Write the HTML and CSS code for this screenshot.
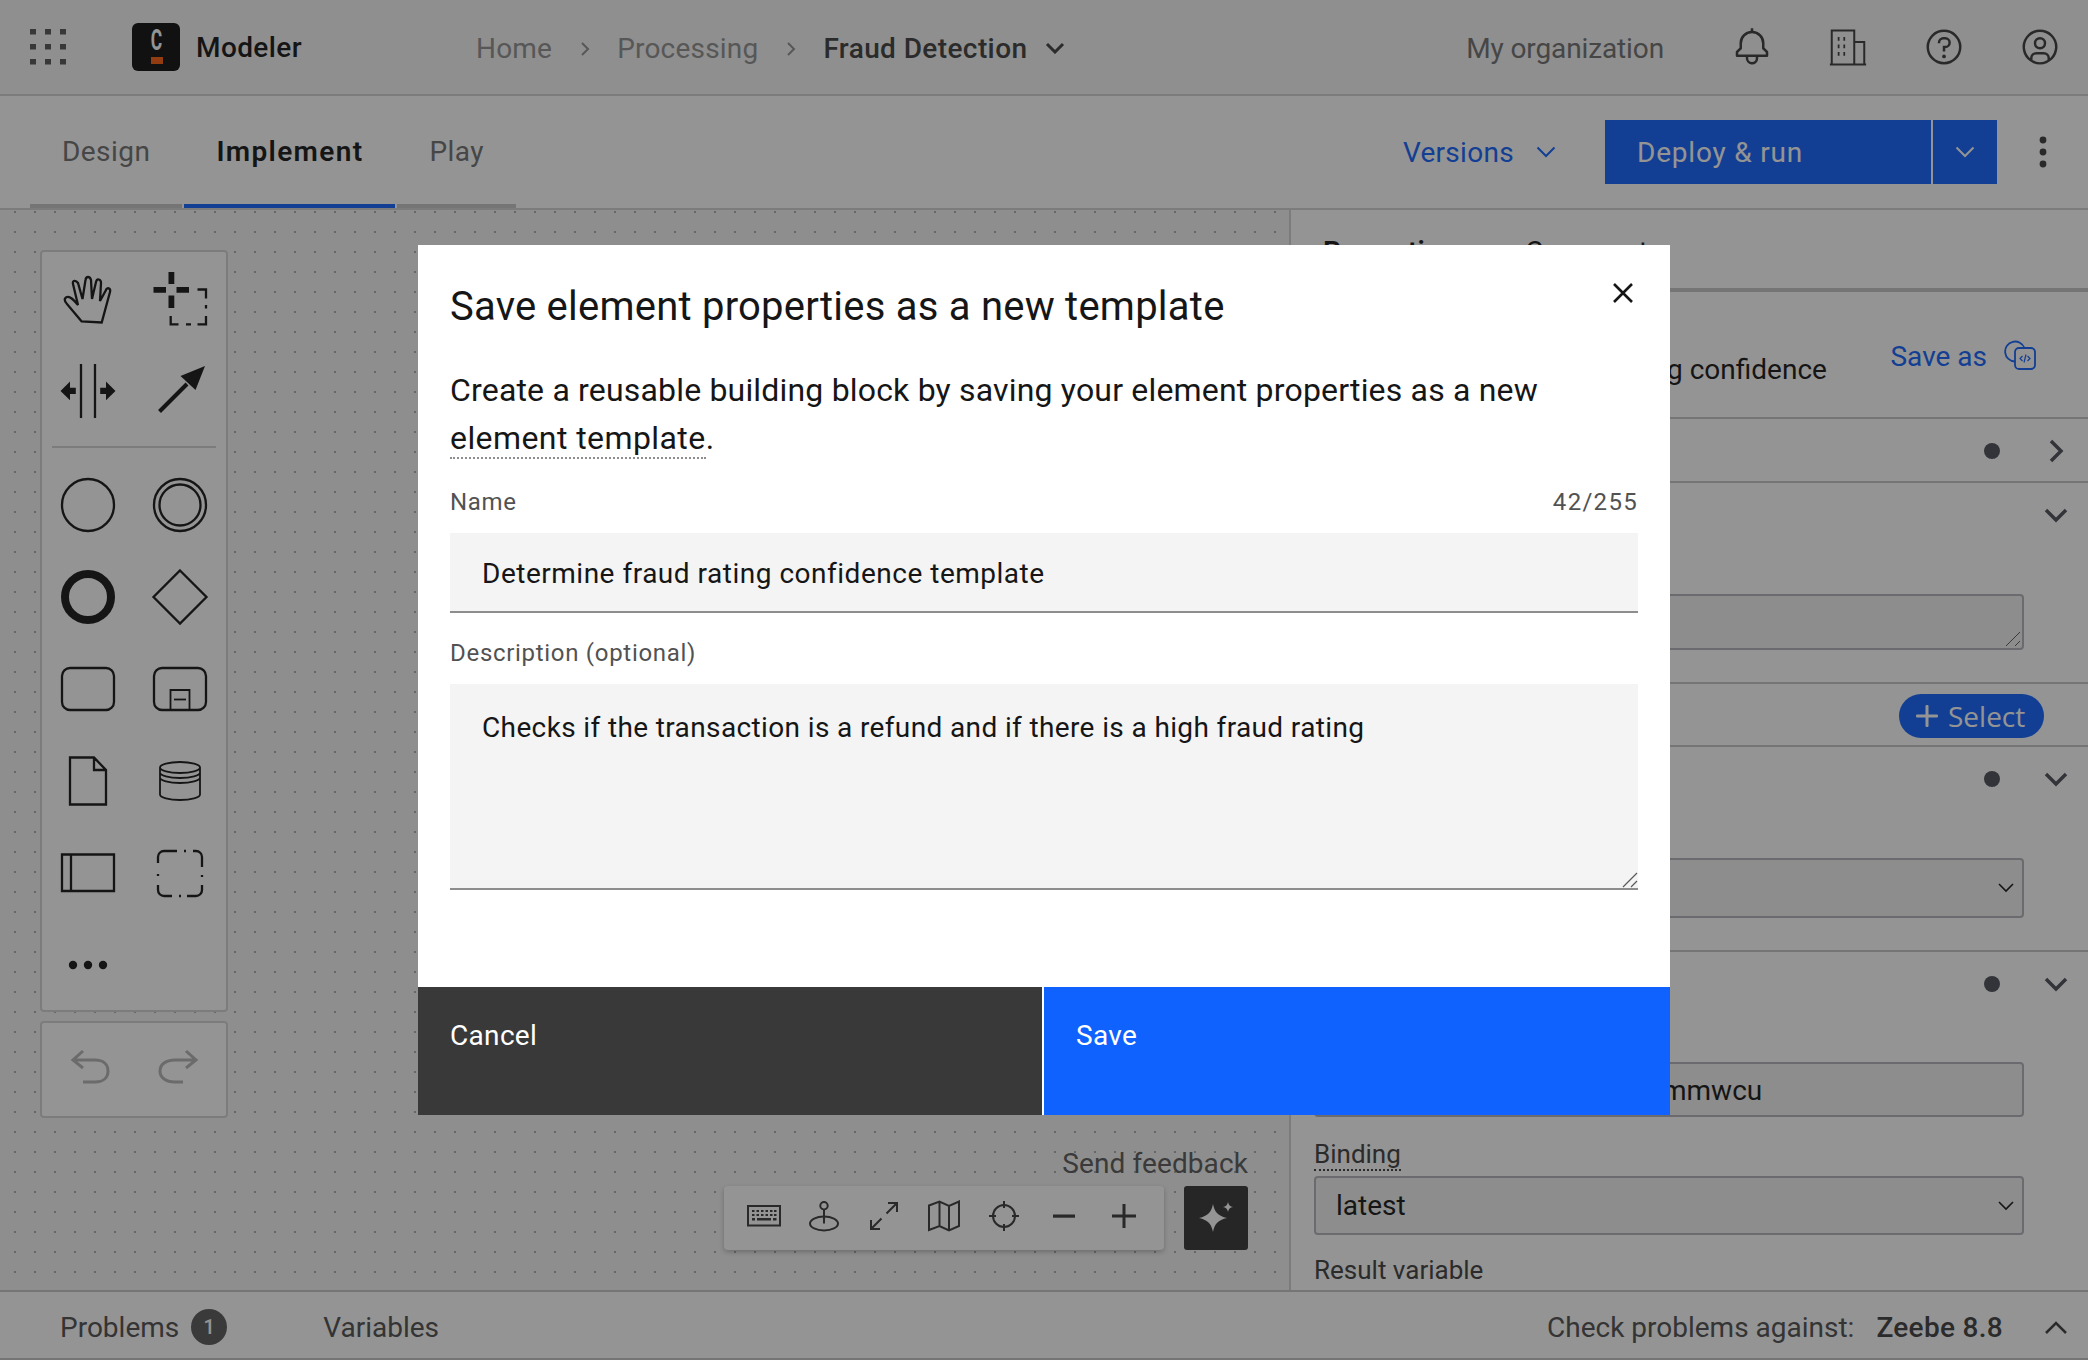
FILE: index.html
```html
<!DOCTYPE html>
<html lang="en">

<head>
    <meta charset="UTF-8" />
    <meta name="viewport" content="width=device-width, initial-scale=1.0" />
    <title>Modeler - Fraud Detection</title>
    <link rel="stylesheet" href="styles.css">
</head>

<body>
    <div class="app">
        <header class="topbar">
            <svg class="apps" width="37" height="36" viewBox="0 0 37 36" fill="#555">
                <rect x="0" y="0" width="6" height="5.500" /><rect x="15" y="0" width="6" height="5.500" /><rect x="30" y="0" width="6" height="5.500" />
                <rect x="0" y="15" width="6" height="5.500" /><rect x="15" y="15" width="6" height="5.500" /><rect x="30" y="15" width="6" height="5.500" />
                <rect x="0" y="30" width="6" height="5.500" /><rect x="15" y="30" width="6" height="5.500" /><rect x="30" y="30" width="6" height="5.500" />
            </svg>
            <div class="logo"><span class="logo-c">C</span><i class="logo-dot"></i></div>
            <div class="product">Modeler</div>
            <nav class="crumbs">
                <span class="crumb">Home</span>
                <svg class="crumb-sep" width="12" height="14" viewBox="0 0 12 14"><path d="M3 1l6 6-6 6" /></svg>
                <span class="crumb">Processing</span>
                <svg class="crumb-sep" width="12" height="14" viewBox="0 0 12 14"><path d="M3 1l6 6-6 6" /></svg>
                <span class="crumb current">Fraud Detection</span>
                <svg class="crumb-caret" width="20" height="12" viewBox="0 0 20 12"><path d="M2 2l8 8 8-8" /></svg>
            </nav>
            <div class="topbar-right">
                <span class="org">My organization</span>
                <div class="top-icon">
                    <svg width="40" height="40" viewBox="0 0 32 32" fill="#3a3a3a"><path d="M28.7071,19.293,26,16.5859V13a10.0136,10.0136,0,0,0-9-9.9492V1H15V3.0508A10.0136,10.0136,0,0,0,6,13v3.5859L3.2929,19.293A1,1,0,0,0,3,20v3a1,1,0,0,0,1,1h7v.7768a5.152,5.152,0,0,0,4.5,5.1987A5.0057,5.0057,0,0,0,21,25V24h7a1,1,0,0,0,1-1V20A1,1,0,0,0,28.7071,19.293ZM19,25a3,3,0,0,1-6,0V24h6Zm8-3H5V20.4141L7.707,17.707A1,1,0,0,0,8,17V13a8,8,0,0,1,16,0v4a1,1,0,0,0,.2929.707L27,20.4141Z" /></svg>
                </div>
                <div class="top-icon">
                    <svg width="40" height="40" viewBox="0 0 32 32" fill="none" stroke="#3a3a3a" stroke-width="1.6"><path d="M3 30V2.8h18V30M21 12h8v18M1.5 30h29" /><path d="M8.5 8v3M13 8v3M8.5 14v3M13 14v3M8.5 20v3M13 20v3" stroke-width="1.4" /></svg>
                </div>
                <div class="top-icon">
                    <svg width="40" height="40" viewBox="0 0 32 32" fill="#3a3a3a"><path d="M16,2A14,14,0,1,0,30,16,14,14,0,0,0,16,2Zm0,26A12,12,0,1,1,28,16,12,12,0,0,1,16,28Z" /><circle cx="16" cy="23.5" r="1.5" /><path d="M17,8H15.5A4.49,4.49,0,0,0,11,12.5V13h2v-.5A2.5,2.5,0,0,1,15.5,10H17a2.5,2.5,0,0,1,0,5H15v4.5h2V17a4.5,4.5,0,0,0,0-9Z" /></svg>
                </div>
                <div class="top-icon">
                    <svg width="40" height="40" viewBox="0 0 32 32" fill="#3a3a3a"><path d="M16,8a5,5,0,1,0,5,5A5,5,0,0,0,16,8Zm0,8a3,3,0,1,1,3-3A3.0034,3.0034,0,0,1,16,16Z" /><path d="M16,2A14,14,0,1,0,30,16,14.0158,14.0158,0,0,0,16,2ZM10,26.3765V25a3.0033,3.0033,0,0,1,3-3h6a3.0033,3.0033,0,0,1,3,3v1.3765a11.8989,11.8989,0,0,1-12,0Zm13.9925-1.4507A5.0016,5.0016,0,0,0,19,20H13a5.0016,5.0016,0,0,0-4.9925,4.9258,12,12,0,1,1,15.985,0Z" /></svg>
                </div>
            </div>
        </header>

        <div class="modebar">
            <div class="tabs">
                <div class="tab">Design</div>
                <div class="tab active">Implement</div>
                <div class="tab">Play</div>
            </div>
            <div class="modebar-right">
                <span class="versions">Versions</span>
                <svg class="versions-caret" width="20" height="12" viewBox="0 0 20 12"><path d="M1.5 1.5L10 10l8.5-8.5" /></svg>
                <div class="deploy">
                    <span class="deploy-main">Deploy &amp; run</span>
                    <span class="deploy-caret"><svg width="20" height="12" viewBox="0 0 20 12"><path d="M1.5 1.5L10 10l8.5-8.5" /></svg></span>
                </div>
                <svg class="kebab" width="8" height="32" viewBox="0 0 8 32" fill="#3a3a3a"><circle cx="4" cy="4" r="3.4" /><circle cx="4" cy="16" r="3.4" /><circle cx="4" cy="28" r="3.4" /></svg>
            </div>
        </div>

        <div class="workspace">
            <main class="canvas">
                <div class="palette">
                    <!-- hand tool -->
                    <svg class="tool" viewBox="0 0 92 92"><path class="thin" d="M39.7 69.5L25 52c-3-3-3-6 0-7 3-1 6 2 11 8l-5-21c-1-4 3-4 5-1l4.500 16 3-19c.5-4 4.500-4 5.500 0l1 19 4-17c1-4 5-3 5 1l-1 18 6-11c1-3 5-2 4 2l-8.300 30.500z" /></svg>
                    <!-- lasso -->
                    <svg class="tool" viewBox="0 0 92 92"><path fill="#161616" d="M34.500 20h5.800v12h-5.800zM34.500 43.500h5.800V56h-5.800zM19.500 35h12.500v5.800H19.500zM42.500 35h12.500v5.800H42.500z" /><path class="thin" d="M63.500 37.500H72v9M72 53v3.500M72 64v8.300h-8.500M57 72.300h-5M44.500 72.300h-7.800V64" /></svg>
                    <!-- space tool -->
                    <svg class="tool" viewBox="0 0 92 92"><path class="thin" d="M39 20v54M53 20v54" /><path fill="#161616" d="M18.500 47L28 37.500v6.200h5.800V50H28v6.300zM73.500 47L64 37.500v6.200h-5.800V50H64v6.300z" /></svg>
                    <!-- global connect -->
                    <svg class="tool" viewBox="0 0 92 92"><path class="thick" d="M25.500 67.500L53 40" /><path fill="#161616" d="M71 22L61.500 46 46.500 32z" /></svg>

                    <div class="palette-sep"></div>

                    <svg class="tool" viewBox="0 0 92 92"><circle class="thin" cx="46" cy="46" r="26" /></svg>
                    <svg class="tool" viewBox="0 0 92 92"><circle class="thin" cx="46" cy="46" r="26" /><circle class="thin" cx="46" cy="46" r="20.500" /></svg>
                    <svg class="tool" viewBox="0 0 92 92"><circle cx="46" cy="46" r="23" fill="none" stroke="#161616" stroke-width="8" /></svg>
                    <svg class="tool" viewBox="0 0 92 92"><path class="thin" d="M46 19.500L72.500 46 46 72.500 19.500 46z" /></svg>
                    <svg class="tool" viewBox="0 0 92 92"><rect class="thin" x="20" y="25" width="52" height="42" rx="8" /></svg>
                    <svg class="tool" viewBox="0 0 92 92"><rect class="thin" x="20" y="25" width="52" height="42" rx="8" /><path class="hair" d="M36.500 67V47h19v20" /><path class="hair" d="M40 56.500h12" /></svg>
                    <svg class="tool" viewBox="0 0 92 92"><path class="thin" d="M28 22.500h24L64 35v34.500H28zM52 22.500V35h12" /></svg>
                    <svg class="tool" viewBox="0 0 92 92"><path class="hair" d="M26 32.500c0-3 9-5.500 20-5.500s20 2.500 20 5.500-9 5.500-20 5.500-20-2.500-20-5.500zM26 32.500v27c0 3 9 5.500 20 5.500s20-2.500 20-5.500v-27M26 37.500c0 3 9 5.500 20 5.500s20-2.500 20-5.500M26 42.500c0 3 9 5.500 20 5.500s20-2.500 20-5.500" /></svg>
                    <svg class="tool" viewBox="0 0 92 92"><path class="thin" d="M20 27.500h52v36.500H20zM29 27.500v36.500" /></svg>
                    <svg class="tool" viewBox="0 0 92 92"><path class="thin" d="M24 36v-6a6 6 0 0 1 6-6h13M50 24h2M59 24h3a6 6 0 0 1 6 6v10M68 48v2M68 58v5a6 6 0 0 1-6 6h-9M45 69h2M38 69h-8a6 6 0 0 1-6-6v-5M24 47v2" /></svg>
                    <svg class="tool" viewBox="0 0 92 92"><g class="solid"><circle cx="31" cy="46" r="4.200" /><circle cx="46" cy="46" r="4.200" /><circle cx="61" cy="46" r="4.200" /></g></svg>
                </div>

                <div class="history">
                    <svg class="tool" viewBox="0 0 92 92"><path class="muted" d="M41 28L31 37l10 8M31 37h22c9 0 13 5 13 11s-4 11-13 11H41" /></svg>
                    <svg class="tool" viewBox="0 0 92 92"><path class="muted" d="M52 28l10 9-10 8M62 37H41c-10 0-15 5-15 11s5 11 15 11h8" /></svg>
                </div>

                <div class="canvas-actions">
                    <div class="feedback">Send feedback</div>
                    <div class="actions-row">
                        <div class="viewbar">
                            <svg class="view-icon" viewBox="0 0 36 32" fill="#3a3a3a"><path fill-rule="evenodd" d="M1 5h34v21.500H1zm2 2v17.500h30V7z" /><path d="M6 10h2.500v2H6zM10.500 10H13v2h-2.500zM15 10h2.500v2H15zM19.500 10H22v2h-2.500zM24 10h2.500v2H24zM28 10h2.500v2H28zM6 14h2.500v2H6zM10.500 14H13v2h-2.500zM15 14h2.500v2H15zM19.500 14H22v2h-2.500zM24 14h2.500v2H24zM28 14h2.500v2H28zM6 18h3v2.500H6zM11 18h14v2.500H11zM27 18h3.500v2.500H27z" /></svg>
                            <svg class="view-icon" viewBox="0 0 32 32"><g class="line"><circle cx="16" cy="5.700" r="3.700" /><ellipse cx="16" cy="23.500" rx="14" ry="7" /><path d="M16 9.500v14" /></g></svg>
                            <svg class="view-icon" viewBox="0 0 32 32"><g class="line"><path d="M20 3h9v9M29 3L18.500 13.500M12 29H3v-9M3 29l10.500-10.500" /></g></svg>
                            <svg class="view-icon" viewBox="0 0 32 32"><g class="line"><path d="M1 5.500l10.500-4L21 6l10-4.500V26l-10 4.500L11.500 26 1 30zM11.500 1.500V26M21 6v24.500" /></g></svg>
                            <svg class="view-icon" viewBox="0 0 32 32"><g class="line"><circle cx="16" cy="16" r="11" /><path d="M16 1v7M16 24v7M1 16h7M24 16h7" /></g></svg>
                            <svg class="view-icon" viewBox="0 0 32 32" fill="#3a3a3a"><rect x="5" y="14.500" width="22" height="3.200" /></svg>
                            <svg class="view-icon" viewBox="0 0 32 32" fill="#3a3a3a"><rect x="4" y="14.500" width="24" height="3" /><rect x="14.500" y="4" width="3" height="24" /></svg>
                        </div>
                        <div class="ai-button">
                            <svg width="36" height="36" viewBox="0 0 36 36" fill="#fff"><path d="M15 4c1.500 8 5 12 14 14-9 2-12.500 6-14 14-1.500-8-5-12-14-14 9-2 12.500-6 14-14z" /><path d="M30 2c.6 3 2 4.400 5 5-3 .6-4.400 2-5 5-.6-3-2-4.400-5-5 3-.6 4.400-2 5-5z" /></svg>
                        </div>
                    </div>
                </div>
            </main>

            <aside class="props">
                <div class="props-tabs">
                    <span class="props-tab active">Properties</span>
                    <span class="props-tab">Comments</span>
                </div>
                <div class="props-head">
                    <span class="props-name">Determine fraud rating confidence</span>
                    <span class="save-as">Save as</span>
                    <svg width="34" height="30" viewBox="0 0 34 30" fill="none" stroke="#0f62fe" stroke-width="1.800"><path d="M11 21.500A10 10 0 1 1 20.500 8" /><rect x="11" y="8" width="20" height="21" rx="4" /><path d="M18.500 16l-2.500 2.500 2.500 2.500M23.500 16l2.500 2.500-2.500 2.500M22 14.500l-2 8" stroke-width="1.200" /></svg>
                </div>
                <section class="group group-short">
                    <div class="group-head"><i class="dot"></i><svg class="arrow" width="32" height="32" viewBox="0 0 32 32"><path d="M11 6l10 10-10 10" /></svg></div>
                </section>
                <section class="group group-docs">
                    <div class="group-head"><svg class="arrow" width="32" height="32" viewBox="0 0 32 32"><path d="M6 11l10 10 10-10" /></svg></div>
                    <div class="field field-area"><svg class="grip" width="16" height="16" viewBox="0 0 16 16"><path d="M1 15L15 1M10 15l5-5" /></svg></div>
                </section>
                <section class="group group-select">
                    <div class="pill"><svg width="24" height="24" viewBox="0 0 24 24" fill="#fff"><rect x="1" y="10.500" width="22" height="3" rx="1" /><rect x="10.500" y="1" width="3" height="22" rx="1" /></svg>Select</div>
                </section>
                <section class="group group-impl">
                    <div class="group-head"><i class="dot"></i><svg class="arrow" width="32" height="32" viewBox="0 0 32 32"><path d="M6 11l10 10 10-10" /></svg></div>
                    <div class="field field-select"><svg class="select-caret" width="16" height="10" viewBox="0 0 16 10"><path d="M1 1l7 7 7-7" /></svg></div>
                </section>
                <section class="group group-last">
                    <div class="group-head"><i class="dot"></i><svg class="arrow" width="32" height="32" viewBox="0 0 32 32"><path d="M6 11l10 10 10-10" /></svg></div>
                    <div class="field field-id">mmwcu</div>
                    <div class="prop-label binding"><span>Binding</span></div>
                    <div class="field field-binding">latest<svg class="select-caret" width="16" height="10" viewBox="0 0 16 10"><path d="M1 1l7 7 7-7" /></svg></div>
                    <div class="prop-label result">Result variable</div>
                </section>
            </aside>
        </div>

        <footer class="statusbar">
            <span class="status-tab">Problems</span>
            <span class="badge">1</span>
            <span class="status-tab variables">Variables</span>
            <span class="check">Check problems against:</span>
            <span class="engine">Zeebe 8.8</span>
            <svg class="status-caret" width="24" height="14" viewBox="0 0 24 14"><path d="M2 12L12 2l10 10" /></svg>
        </footer>
    </div>

    <div class="overlay">
        <div class="modal">
            <svg class="close" width="20" height="20" viewBox="0 0 20 20"><path d="M1 1l18 18M19 1L1 19" /></svg>
            <h2 class="modal-title">Save element properties as a new template</h2>
            <p class="modal-text">Create a reusable building block by saving your element properties as a new <span class="term">element template</span>.</p>
            <div class="label-row"><span>Name</span><span class="counter">42/255</span></div>
            <div class="text-input">Determine fraud rating confidence template</div>
            <div class="label-row"><span>Description (optional)</span></div>
            <div class="text-area">Checks if the transaction is a refund and if there is a high fraud rating
                <svg class="area-grip" width="16" height="16" viewBox="0 0 16 16"><path d="M1 15L15 1M9 15l6-6" /></svg>
            </div>
            <div class="modal-footer">
                <div class="btn-cancel">Cancel</div>
                <div class="btn-save">Save</div>
            </div>
        </div>
    </div>
</body>

</html>
```

FILE: styles.css
```css
* {
    box-sizing: border-box;
}

html,
body {
    margin: 0;
    height: 100%;
    overflow: hidden;
}

body {
    font-family: "Roboto", "Liberation Sans", sans-serif;
    font-size: 28px;
    color: #161616;
    background: #fff;
    position: relative;
}

.app {
    height: 100vh;
    display: flex;
    flex-direction: column;
}

/* top bar */
.topbar {
    height: 96px;
    flex: none;
    display: flex;
    align-items: center;
    padding-left: 30px;
    background: #f6f6f6;
    border-bottom: 2px solid #d2d2d2;
}

.apps {
    flex: none;
}

.logo {
    width: 48px;
    height: 48px;
    margin-left: 65px;
    border-radius: 6px;
    background: #0d0d0d;
    position: relative;
    display: flex;
    justify-content: center;
}

.logo-c {
    color: #fff;
    font-size: 29px;
    font-weight: 700;
    line-height: 34px;
    transform: scaleX(.6);
}

.logo-dot {
    position: absolute;
    left: 19px;
    top: 34px;
    width: 12px;
    height: 7px;
    background: #fc5d0d;
}

.product {
    margin-left: 16px;
    font-weight: 500;
    letter-spacing: .4px;
}

.crumbs {
    margin-left: 174px;
    padding-top: 2px;
    display: flex;
    align-items: center;
    color: #8f8f8f;
    letter-spacing: .2px;
}

.crumb-sep {
    margin: 2px 26px 0 27px;
    fill: none;
    stroke: #8f8f8f;
    stroke-width: 2;
}

.crumb.current {
    color: #3d3d3d;
    font-weight: 500;
    letter-spacing: .4px;
}

.crumb-caret {
    margin-left: 18px;
    fill: none;
    stroke: #3d3d3d;
    stroke-width: 3;
}

.topbar-right {
    margin-left: auto;
    display: flex;
    align-items: center;
}

.org {
    margin-right: 40px;
    padding-top: 2px;
    color: #6f6f6f;
    letter-spacing: -.12px;
}

.top-icon {
    width: 96px;
    display: flex;
    justify-content: center;
}

/* design / implement / play */
.modebar {
    height: 114px;
    flex: none;
    display: flex;
    justify-content: space-between;
    background: #fff;
    border-bottom: 2px solid #d2d2d2;
    padding-left: 30px;
}

.tabs {
    display: flex;
    gap: 2px;
}

.tab {
    padding: 3px 32px 0;
    height: 112px;
    display: flex;
    align-items: center;
    color: #6f6f6f;
    border-bottom: 4px solid #c6c6c6;
    letter-spacing: .45px;
}

.tab.active {
    color: #161616;
    font-weight: 600;
    letter-spacing: 1.35px;
    border-bottom-color: #0f62fe;
}

.modebar-right {
    display: flex;
    align-items: center;
}

.versions {
    color: #0f62fe;
    letter-spacing: .3px;
}

.versions-caret {
    margin-left: 22px;
    fill: none;
    stroke: #0f62fe;
    stroke-width: 2;
}

.deploy {
    margin-left: 49px;
    display: flex;
    gap: 2px;
    height: 64px;
    color: #fff;
}

.deploy-main {
    width: 326px;
    padding: 0 0 0 32px;
    display: flex;
    align-items: center;
    background: #0f62fe;
    letter-spacing: .8px;
}

.deploy-caret {
    width: 64px;
    display: flex;
    align-items: center;
    justify-content: center;
    background: #0f62fe;
}

.deploy-caret svg {
    fill: none;
    stroke: #fff;
    stroke-width: 2;
}

.kebab {
    margin: 0 41px 0 42px;
}

/* main area */
.workspace {
    flex: 1;
    display: flex;
    min-height: 0;
}

.canvas {
    flex: 1;
    position: relative;
    padding: 40px 0 0 40px;
    background-color: #f4f4f4;
    background-image: radial-gradient(circle at center, #adadad 1.1px, transparent 1.3px);
    background-size: 20px 20px;
    background-position: 5px -8px;
    border-right: 2px solid #d2d2d2;
}

.palette {
    width: 188px;
    height: 762px;
    display: grid;
    grid-template-columns: 92px 92px;
    grid-auto-rows: min-content;
    background: #fff;
    border: 2px solid #d2d2d2;
    border-radius: 4px;
}

.palette-sep {
    grid-column: 1 / 3;
    height: 23px;
    position: relative;
}

.palette-sep::after {
    content: "";
    position: absolute;
    left: 10px;
    right: 10px;
    top: 10px;
    height: 2px;
    background: #d2d2d2;
}

.tool {
    width: 92px;
    height: 92px;
    display: block;
    fill: none;
}

.solid {
    fill: #161616;
}

.thin {
    fill: none;
    stroke: #161616;
    stroke-width: 2.300;
}

.thick {
    fill: none;
    stroke: #161616;
    stroke-width: 4;
}

.hair {
    fill: none;
    stroke: #161616;
    stroke-width: 1.800;
}

.muted {
    fill: none;
    stroke: #b4b4b4;
    stroke-width: 3;
}

.history {
    width: 188px;
    height: 97px;
    margin-top: 9px;
    display: flex;
    background: #fff;
    border: 2px solid #d2d2d2;
    border-radius: 4px;
}

.canvas-actions {
    position: absolute;
    right: 41px;
    bottom: 40px;
    display: flex;
    flex-direction: column;
    align-items: flex-end;
}

.feedback {
    color: #5a5a5a;
    line-height: 36px;
    margin-bottom: 4px;
    letter-spacing: .1px;
}

.actions-row {
    display: flex;
    gap: 20px;
}

.viewbar {
    width: 440px;
    height: 64px;
    padding: 0 10px 4px;
    display: flex;
    align-items: center;
    background: #fff;
    border-radius: 4px;
    box-shadow: 0 2px 5px rgba(0, 0, 0, .25);
}

.view-icon {
    width: 60px;
    height: 32px;
}

.line {
    fill: none;
    stroke: #3a3a3a;
    stroke-width: 2;
}

.ai-button {
    width: 64px;
    height: 64px;
    display: flex;
    align-items: center;
    justify-content: center;
    background: #343434;
    border-radius: 3px;
}

/* properties panel */
.props {
    width: 797px;
    flex: none;
    overflow: hidden;
    background: #fff;
}

.props-tabs {
    height: 82px;
    display: flex;
    gap: 71px;
    padding: 24px 0 0 32px;
    border-bottom: 4px solid #c6c6c6;
    line-height: 36px;
}

.props-tab.active {
    font-weight: 600;
}

.props-head {
    height: 127px;
    display: flex;
    align-items: flex-start;
    padding: 48px 0 0 113px;
    border-bottom: 2px solid #c6c6c6;
}

.props-name {
    line-height: 60px;
}

.save-as {
    margin: -1px 17px 0 auto;
    color: #0f62fe;
    line-height: 36px;
}

.props-head svg {
    margin: 0 50px 0 0;
}

.group {
    border-bottom: 2px solid #c6c6c6;
}

.group-short {
    height: 64px;
}

.group-head {
    height: 64px;
    display: flex;
    justify-content: flex-end;
    align-items: center;
    padding-right: 16px;
}

.dot {
    width: 16px;
    height: 16px;
    border-radius: 50%;
    background: #4b4f58;
    margin-right: 40px;
}

.arrow {
    fill: none;
    stroke: #4b4f58;
    stroke-width: 3.500;
}

.field {
    position: relative;
    margin: 0 64px 0 23px;
    background: #f1f3f1;
    border: 2px solid #b4b4bb;
    border-radius: 4px;
    display: flex;
    align-items: center;
}

.group-docs {
    height: 201px;
}

.field-area {
    height: 56px;
    margin-top: 47px;
}

.grip {
    position: absolute;
    right: 1px;
    bottom: 1px;
    fill: none;
    stroke: #5a5a5a;
    stroke-width: 1;
}

.group-select {
    height: 63px;
    display: flex;
    justify-content: flex-end;
    align-items: center;
    padding: 2px 44px 0 0;
}

.pill {
    width: 145px;
    height: 44px;
    display: flex;
    align-items: center;
    gap: 9px;
    padding-left: 16px;
    border-radius: 22px;
    background: #0f62fe;
    color: #fff;
    font-family: "Open Sans", sans-serif;
}

.group-impl {
    height: 205px;
}

.field-select {
    height: 60px;
    margin-top: 47px;
}

.select-caret {
    position: absolute;
    right: 8px;
    top: 50%;
    margin-top: -5px;
    fill: none;
    stroke: #161616;
    stroke-width: 1.600;
}

.group-last {
    border-bottom: 0;
}

.field-id {
    height: 55px;
    margin-top: 46px;
    padding: 2px 0 0 346px;
}

.prop-label {
    margin: 0 64px 0 23px;
    font-size: 26px;
    color: #3d3d3d;
}

.binding {
    margin-top: 22px;
    line-height: 30px;
    height: 37px;
}

.binding span {
    border-bottom: 2px dotted #3d3d3d;
}

.field-binding {
    height: 59px;
    margin-top: 0;
    padding-left: 20px;
}

.result {
    margin-top: 19px;
    line-height: 32px;
}

/* bottom bar */
.statusbar {
    height: 70px;
    flex: none;
    display: flex;
    align-items: center;
    padding: 5px 20px 0 60px;
    background: #fff;
    border-top: 2px solid #c6c6c6;
    border-bottom: 2px solid #c6c6c6;
    color: #4f4f4f;
}

.badge {
    width: 36px;
    height: 36px;
    margin: -2px 0 0 12px;
    border-radius: 50%;
    background: #5a5a5a;
    color: #fff;
    font-size: 20px;
    font-weight: 500;
    display: flex;
    align-items: center;
    justify-content: center;
}

.variables {
    margin-left: 96px;
}

.check {
    margin-left: auto;
}

.engine {
    margin-left: 22px;
    font-weight: 500;
    color: #3d3d3d;
    letter-spacing: .3px;
}

.status-caret {
    margin: 1px 0 0 41px;
    fill: none;
    stroke: #3d3d3d;
    stroke-width: 2.500;
}

/* modal */
.overlay {
    position: absolute;
    top: 0;
    left: 0;
    width: 100%;
    height: 100%;
    display: flex;
    align-items: center;
    justify-content: center;
    background: rgba(22, 22, 22, .46);
    z-index: 10;
}

.modal {
    width: 1252px;
    height: 870px;
    position: relative;
    display: flex;
    flex-direction: column;
    padding: 37px 32px 0;
    background: #fff;
}

.close {
    position: absolute;
    right: 37px;
    top: 38px;
    fill: none;
    stroke: #161616;
    stroke-width: 2.600;
}

.modal-title {
    margin: 0;
    font-size: 40px;
    font-weight: 400;
    line-height: 50px;
    letter-spacing: .23px;
}

.modal-text {
    margin: 34px 0 0;
    font-size: 32px;
    line-height: 48px;
    letter-spacing: .18px;
}

.term {
    border-bottom: 2px dotted #8d8d8d;
    letter-spacing: .42px;
}

.label-row {
    display: flex;
    justify-content: space-between;
    margin: 24px 0 15px;
    font-size: 24px;
    line-height: 32px;
    color: #525252;
    letter-spacing: .7px;
}

.counter {
    letter-spacing: 1.3px;
}

.text-input {
    height: 80px;
    padding: 2px 32px 0;
    display: flex;
    align-items: center;
    background: #f4f4f4;
    border-bottom: 2px solid #8d8d8d;
    letter-spacing: .51px;
}

.text-area {
    height: 206px;
    position: relative;
    padding: 24px 32px;
    line-height: 40px;
    background: #f4f4f4;
    border-bottom: 2px solid #8d8d8d;
    letter-spacing: .37px;
}

.area-grip {
    position: absolute;
    right: 0;
    bottom: 0;
    fill: none;
    stroke: #5a5a5a;
    stroke-width: 1.200;
}

.modal-footer {
    margin: auto -32px 0;
    height: 128px;
    display: flex;
    gap: 2px;
    color: #fff;
    letter-spacing: .32px;
}

.btn-cancel,
.btn-save {
    flex: 1;
    padding: 29px 32px 0;
    line-height: 40px;
    background: #393939;
}

.btn-cancel {
    flex: none;
    width: 624px;
}

.btn-save {
    background: #0f62fe;
}
```
